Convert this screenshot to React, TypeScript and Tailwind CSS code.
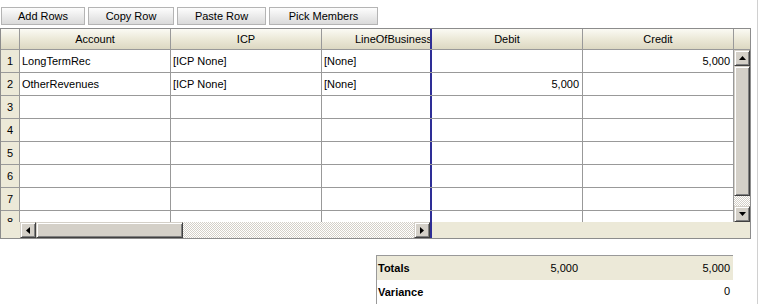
import React from 'react'

const rows = [
  { n: 1, account: 'LongTermRec', icp: '[ICP None]', lob: '[None]', debit: '', credit: '5,000' },
  { n: 2, account: 'OtherRevenues', icp: '[ICP None]', lob: '[None]', debit: '5,000', credit: '' },
  { n: 3, account: '', icp: '', lob: '', debit: '', credit: '' },
  { n: 4, account: '', icp: '', lob: '', debit: '', credit: '' },
  { n: 5, account: '', icp: '', lob: '', debit: '', credit: '' },
  { n: 6, account: '', icp: '', lob: '', debit: '', credit: '' },
  { n: 7, account: '', icp: '', lob: '', debit: '', credit: '' },
  { n: 8, account: '', icp: '', lob: '', debit: '', credit: '' },
]

const btn3d =
  'bg-[#d4d0c8] border border-t-[#d4d0c8] border-l-[#d4d0c8] border-r-[#404040] border-b-[#404040] shadow-[inset_1px_1px_#ffffff,inset_-1px_-1px_#808080] flex items-center justify-center'

const checker =
  'bg-[repeating-conic-gradient(#d4d0c8_0%_25%,#ffffff_0%_50%)] bg-[length:2px_2px]'

function Arrow({ dir }: { dir: 'up' | 'down' | 'left' | 'right' }) {
  const pts = {
    up: '0,4 7,4 3.5,0',
    down: '0,0 7,0 3.5,4',
    left: '4,0 4,7 0,3.5',
    right: '0,0 0,7 4,3.5',
  }[dir]
  const vertical = dir === 'up' || dir === 'down'
  return (
    <svg width={vertical ? 7 : 4} height={vertical ? 4 : 7} viewBox={vertical ? '0 0 7 4' : '0 0 4 7'}>
      <polygon points={pts} fill="#000" />
    </svg>
  )
}

function ToolButton({ label, width }: { label: string; width: string }) {
  return (
    <button
      className={`${width} h-[18px] border border-[#b4b4b4] bg-gradient-to-b from-[#fdfdfd] to-[#dadada] text-[11px] text-black leading-none flex items-center justify-center`}
    >
      {label}
    </button>
  )
}

export default function App() {
  return (
    <div className="w-[759px] h-[304px] bg-white flex overflow-hidden font-['Liberation_Sans',Arial,sans-serif] text-[11px] text-black">
      <div className="w-[757px] flex flex-col">
        {/* Toolbar */}
        <div className="flex gap-[3px] pl-[1px] pt-[7px]">
          <ToolButton label="Add Rows" width="w-[84px]" />
          <ToolButton label="Copy Row" width="w-[86px]" />
          <ToolButton label="Paste Row" width="w-[89px]" />
          <ToolButton label="Pick Members" width="w-[109px]" />
        </div>

        {/* Grid */}
        <div className="mt-[3px] w-[751px] h-[211px] border border-[#8c8c8c] flex flex-col">
          {/* Header */}
          <div className="h-[21px] flex border-b border-[#999] bg-gradient-to-b from-[#fbfaf4] via-[#ece9d8] to-[#dcd8c2]">
            <div className="w-[19px] border-r border-[#999]" />
            <div className="w-[151px] border-r border-[#999] flex items-center justify-center">Account</div>
            <div className="w-[151px] border-r border-[#999] flex items-center justify-center">ICP</div>
            <div className="w-[110px] border-r-2 border-[#2e2e96] overflow-hidden">
              <div className="w-[143px] h-full flex items-center justify-center whitespace-nowrap">LineOfBusiness</div>
            </div>
            <div className="w-[151px] border-r border-[#999] flex items-center justify-center">Debit</div>
            <div className="w-[151px] border-r border-[#999] flex items-center justify-center">Credit</div>
            <div className="flex-1" />
          </div>

          {/* Body */}
          <div className="flex flex-col flex-1">
            <div className="h-[172px] flex">
              <div className="w-[733px] overflow-hidden">
                {rows.map((r) => (
                  <div key={r.n} className="h-[23px] flex border-b border-[#999] shrink-0">
                    <div className="w-[19px] border-r border-[#999] bg-[#ece9d8] flex items-center justify-center">
                      {r.n}
                    </div>
                    <div className="w-[151px] border-r border-[#999] flex items-center pl-[2px]">{r.account}</div>
                    <div className="w-[151px] border-r border-[#999] flex items-center pl-[2px]">{r.icp}</div>
                    <div className="w-[110px] border-r-2 border-[#2e2e96] flex items-center pl-[2px]">{r.lob}</div>
                    <div className="w-[151px] border-r border-[#999] flex items-center justify-end pr-[3px]">{r.debit}</div>
                    <div className="w-[151px] border-r border-[#999] flex items-center justify-end pr-[3px]">{r.credit}</div>
                  </div>
                ))}
              </div>
              {/* Vertical scrollbar */}
              <div className="w-[16px] flex flex-col">
                <div className={`h-[16px] ${btn3d}`}>
                  <Arrow dir="up" />
                </div>
                <div className={`h-[130px] ${btn3d}`} />
                <div className={`h-[10px] ${checker}`} />
                <div className={`h-[16px] ${btn3d}`}>
                  <Arrow dir="down" />
                </div>
              </div>
            </div>

            {/* Horizontal scrollbar row */}
            <div className="h-[16px] flex">
              <div className="w-[19px] bg-[#ece9d8]" />
              <div className={`w-[16px] ${btn3d}`}>
                <Arrow dir="left" />
              </div>
              <div className={`w-[147px] ${btn3d}`} />
              <div className={`w-[231px] ${checker}`} />
              <div className={`w-[16px] ${btn3d}`}>
                <Arrow dir="right" />
              </div>
              <div className="w-[2px] bg-[#2e2e96]" />
              <div className="flex-1 bg-[#ece9d8]" />
            </div>
          </div>
        </div>

        {/* Totals */}
        <div className="mt-[16px] ml-[376px] w-[357px] border-l border-t border-[#999] flex flex-col">
          <div className="h-[24px] bg-[#ece9d8] flex items-center">
            <div className="flex-1 pl-[1px] font-bold">Totals</div>
            <div className="w-[150px] text-right pr-[3px]">5,000</div>
            <div className="w-[152px] text-right pr-[3px]">5,000</div>
          </div>
          <div className="h-[24px] flex">
            <div className="flex-1 pl-[1px] font-bold flex items-center">Variance</div>
            <div className="w-[152px] text-right pr-[3px] pt-[3px]">0</div>
          </div>
        </div>
      </div>
      <div className="flex-1 border-l border-[#d0d0d0]" />
    </div>
  )
}
